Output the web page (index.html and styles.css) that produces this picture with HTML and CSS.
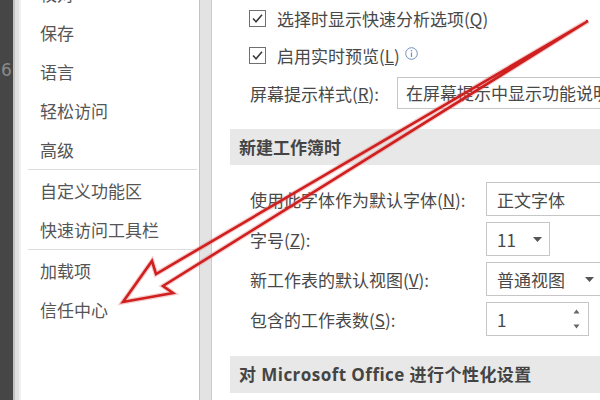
FILE: index.html
```html
<!DOCTYPE html>
<html lang="zh-CN">
<head>
<meta charset="utf-8">
<title>Excel 选项</title>
<link rel="stylesheet" href="styles.css">
</head>
<body>
<div class="app">
  <div class="edge"><span class="edge-num">6</span></div>
  <div class="gutter"></div>
  <nav class="side">
    <ul class="menu">
      <li class="item">校对</li>
      <li class="item">保存</li>
      <li class="item">语言</li>
      <li class="item">轻松访问</li>
      <li class="item">高级</li>
      <li class="sep"></li>
      <li class="item">自定义功能区</li>
      <li class="item">快速访问工具栏</li>
      <li class="sep"></li>
      <li class="item">加载项</li>
      <li class="item">信任中心</li>
    </ul>
  </nav>
  <div class="divider"></div>
  <main class="main">
    <div class="opt-row">
      <span class="cb"><svg width="15" height="15" viewBox="0 0 15 15"><path d="M3 7.5l3 3.2 6-7" fill="none" stroke="#3a3a3a" stroke-width="1.6"/></svg></span>
      <span>选择时显示快速分析选项(<u>Q</u>)</span>
    </div>
    <div class="opt-row">
      <span class="cb"><svg width="15" height="15" viewBox="0 0 15 15"><path d="M3 7.5l3 3.2 6-7" fill="none" stroke="#3a3a3a" stroke-width="1.6"/></svg></span>
      <span>启用实时预览(<u>L</u>)</span>
      <svg class="info" width="13" height="13" viewBox="0 0 13 13"><circle cx="6.5" cy="6.5" r="5.8" fill="none" stroke="#6f8fb8" stroke-width="1"/><circle cx="6.5" cy="3.8" r="0.8" fill="#6f8fb8"/><path d="M6.5 5.5v4.5" stroke="#6f8fb8" stroke-width="1.2"/></svg>
    </div>
    <div class="tip-row">
      <span class="tip-lbl">屏幕提示样式(<u>R</u>):</span>
      <div class="select">在屏幕提示中显示功能说明</div>
    </div>

    <div class="band">新建工作簿时</div>
    <div class="form">
      <div class="frow">
        <span class="lbl">使用此字体作为默认字体(<u>N</u>):</span>
        <div class="box w-font">正文字体</div>
      </div>
      <div class="frow">
        <span class="lbl">字号(<u>Z</u>):</span>
        <div class="box w-size"><span>11</span><svg class="dd" width="9" height="5" viewBox="0 0 9 5"><path d="M0 0h9L4.5 5z" fill="#555"/></svg></div>
      </div>
      <div class="frow">
        <span class="lbl">新工作表的默认视图(<u>V</u>):</span>
        <div class="box w-view"><span>普通视图</span><svg class="dd" width="9" height="5" viewBox="0 0 9 5"><path d="M0 0h9L4.5 5z" fill="#555"/></svg></div>
      </div>
      <div class="frow">
        <span class="lbl">包含的工作表数(<u>S</u>):</span>
        <div class="box w-count"><span>1</span><svg class="spin" width="9" height="32" viewBox="0 0 9 32"><path d="M1.5 10.5L4.5 6.5 7.5 10.5z" fill="#666"/><path d="M1.5 21.5h6L4.5 25.5z" fill="#666"/></svg></div>
      </div>
    </div>
    <div class="band band2">对 Microsoft Office 进行个性化设置</div>
  </main>
  <svg class="arrow" width="600" height="400" viewBox="0 0 600 400">
    <polygon points="588,21 156,274 152,261 123,302 173,293 163,286" fill="none" stroke="rgba(225,110,110,0.35)" stroke-width="5" stroke-linejoin="miter"/>
    <polygon points="588,21 156,274 152,261 123,302 173,293 163,286" fill="none" stroke="#cf1f1f" stroke-width="2.6" stroke-linejoin="miter"/>
  </svg>
</div>
</body>
</html>
```

FILE: styles.css
```css
* {
  box-sizing: border-box;
  margin: 0;
  padding: 0;
}

html, body {
  width: 600px;
  height: 400px;
  overflow: hidden;
  background: #fff;
}

body {
  font-family: "Noto Sans CJK SC", "Noto Sans", sans-serif;
}

.app {
  position: relative;
  display: flex;
  width: 600px;
  height: 400px;
}

.edge {
  flex: none;
  width: 13px;
  background: #464646;
  padding-top: 60px;
  overflow: hidden;
}

.edge-num {
  display: block;
  margin-left: 1px;
  font: 17px/20px "DejaVu Sans", sans-serif;
  color: #8a8a8a;
}

.gutter {
  flex: none;
  width: 8px;
  background: linear-gradient(to right, #c2c2c2 0 2px, #e0e0e0 2px 6px, #f0f0f0 6px);
}

.side {
  flex: none;
  width: 178px;
  background: #fff;
  overflow: hidden;
}

.menu {
  list-style: none;
  margin-top: -26px;
}

.item {
  height: 39px;
  line-height: 39px;
  padding-left: 19px;
  font-size: 17px;
  color: #555;
  white-space: nowrap;
}

.sep {
  height: 2px;
  margin: 0 2px 0 7px;
  border-top: 1px solid #dddddd;
}

.divider {
  flex: none;
  width: 13px;
  background: #e3e3e3;
  border-left: 1px solid #c3c3c3;
  border-right: 1px solid #cbcbcb;
}

.main {
  flex: 1;
  min-width: 0;
  overflow: hidden;
  padding-left: 18px;
  color: #484848;
  font-size: 17px;
  white-space: nowrap;
}

.opt-row {
  display: flex;
  align-items: center;
  height: 37px;
  padding-left: 19px;
}

.cb {
  flex: none;
  display: flex;
  align-items: center;
  justify-content: center;
  width: 17px;
  height: 17px;
  margin-right: 11px;
  border: 1px solid #707070;
  background: #fff;
}

.info {
  flex: none;
  margin-left: 5px;
  margin-top: -4px;
}

.tip-row {
  display: flex;
  align-items: center;
  height: 38px;
  padding-left: 20px;
}

.tip-lbl {
  flex: none;
  width: 147px;
}

.select {
  flex: none;
  width: 240px;
  height: 32px;
  line-height: 30px;
  padding-left: 8px;
  border: 1px solid #c6c6c6;
}

.band {
  margin-top: 17px;
  height: 36px;
  line-height: 36px;
  padding-left: 9px;
  background: #e8e8e8;
  font-weight: 700;
  color: #444;
}

.band2 {
  height: 37px;
  line-height: 37px;
  letter-spacing: 0.45px;
  font-family: "Open Sans", "Noto Sans CJK SC", sans-serif;
}

.form {
  margin-top: 14px;
}

.frow {
  display: flex;
  align-items: center;
  height: 40px;
  padding-left: 20px;
}

.lbl {
  flex: none;
  width: 236px;
}

.box {
  flex: none;
  display: flex;
  align-items: center;
  justify-content: space-between;
  height: 34px;
  padding: 0 7px 0 10px;
  border: 1px solid #c6c6c6;
  background: #fff;
}

.w-font {
  width: 130px;
}

.w-size {
  width: 64px;
}

.w-view {
  width: 117px;
  padding-right: 8px;
}

.w-count {
  width: 103px;
}

.arrow {
  position: absolute;
  left: 0;
  top: 0;
  pointer-events: none;
}
```
